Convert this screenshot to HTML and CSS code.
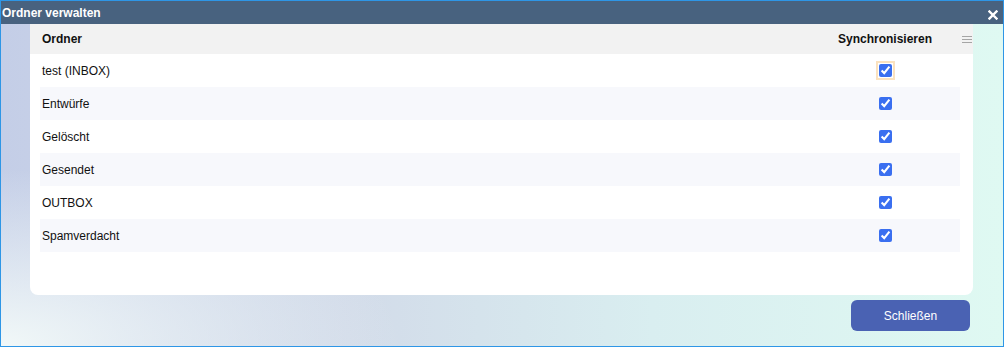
FILE: index.html
```html
<!DOCTYPE html>
<html lang="de">
<head>
    <meta charset="UTF-8">
    <meta name="viewport" content="width=device-width, initial-scale=1.0">
    <title>Ordner verwalten</title>
    <link rel="stylesheet" href="styles.css">
</head>
<body>
    <div class="dialog">
        <div class="titlebar">
            <span class="title">Ordner verwalten</span>
            <span class="close">
                <svg width="10" height="10" viewBox="0 0 10 10">
                    <path d="M1.5 1.5 L8.5 8.5 M8.5 1.5 L1.5 8.5" stroke="#fff" stroke-width="2.4" stroke-linecap="square"/>
                </svg>
            </span>
        </div>

        <div class="content">
            <div class="card">
                <div class="head">
                    <div class="col-name">Ordner</div>
                    <div class="col-sync">Synchronisieren</div>
                    <div class="menu">
                        <svg width="10" height="9" viewBox="0 0 10 9">
                            <rect x="0" y="0" width="10" height="1" fill="#a5a5a5"/>
                            <rect x="0" y="3" width="10" height="1" fill="#a5a5a5"/>
                            <rect x="0" y="6" width="10" height="1" fill="#a5a5a5"/>
                        </svg>
                    </div>
                </div>

                <div class="rows">
                    <div class="row">
                        <div class="col-name">test (INBOX)</div>
                        <div class="col-sync"><input type="checkbox" class="focused" checked></div>
                    </div>
                    <div class="row">
                        <div class="col-name">Entwürfe</div>
                        <div class="col-sync"><input type="checkbox" checked></div>
                    </div>
                    <div class="row">
                        <div class="col-name">Gelöscht</div>
                        <div class="col-sync"><input type="checkbox" checked></div>
                    </div>
                    <div class="row">
                        <div class="col-name">Gesendet</div>
                        <div class="col-sync"><input type="checkbox" checked></div>
                    </div>
                    <div class="row">
                        <div class="col-name">OUTBOX</div>
                        <div class="col-sync"><input type="checkbox" checked></div>
                    </div>
                    <div class="row">
                        <div class="col-name">Spamverdacht</div>
                        <div class="col-sync"><input type="checkbox" checked></div>
                    </div>
                </div>
            </div>

            <div class="actions">
                <button class="btn">Schließen</button>
            </div>
        </div>
    </div>
</body>
</html>
```

FILE: styles.css
```css
html, body {
    margin: 0;
    height: 100%;
}

body {
    font-family: "Liberation Sans", Arial, sans-serif;
    font-size: 12px;
    color: #111;
}

.dialog {
    box-sizing: border-box;
    height: 347px;
    border: 1px solid #2e96e6;
    display: flex;
    flex-direction: column;
}

.titlebar {
    height: 23px;
    background-color: #48627f;
    color: #fff;
    display: flex;
    align-items: center;
    justify-content: space-between;
    padding: 0 5px 0 1px;
}

.title {
    font-weight: bold;
    font-size: 12px;
}

.close {
    display: flex;
    margin-top: 4px;
}

.content {
    flex: 1;
    display: flex;
    flex-direction: column;
    background:
        radial-gradient(ellipse 40% 55% at 0% 100%, rgba(241, 248, 248, 1) 0%, rgba(241, 248, 248, 0) 100%),
        linear-gradient(90deg, #c4cee7 0%, #d2dbe9 35%, #d9eef0 65%, #dff9f2 100%);
}

.card {
    margin: 0 30px 0 29px;
    height: 271px;
    background: #fff;
    border-radius: 0 0 8px 8px;
}

.head {
    height: 30px;
    background-color: #f2f2f2;
    display: grid;
    grid-template-columns: 1fr 150px 13px;
    align-items: center;
    padding-left: 10px;
    font-weight: bold;
}

.col-name {
    padding-left: 2px;
}

.col-sync {
    text-align: center;
    display: flex;
    justify-content: center;
    align-items: center;
}

.menu {
    display: flex;
    align-items: center;
    height: 100%;
    padding: 2px 0 0 2px;
    box-sizing: border-box;
}

.rows {
    margin: 0 13px 0 10px;
}

.row {
    height: 33px;
    display: grid;
    grid-template-columns: 1fr 150px;
    align-items: center;
}

.row:nth-child(even) {
    background-color: #f7f8fc;
}

input[type="checkbox"] {
    width: 13px;
    height: 13px;
    margin: 0;
    accent-color: #3a6ff0;
}

input.focused {
    outline: 2px solid #fbe2bf;
    outline-offset: 1px;
}

.actions {
    display: flex;
    justify-content: flex-end;
    padding: 5px 33px 0 0;
}

.btn {
    width: 119px;
    height: 31px;
    border: none;
    border-radius: 6px;
    background-color: #4a62b3;
    color: #fff;
    font-family: "Liberation Sans", Arial, sans-serif;
    font-size: 12px;
}
```
